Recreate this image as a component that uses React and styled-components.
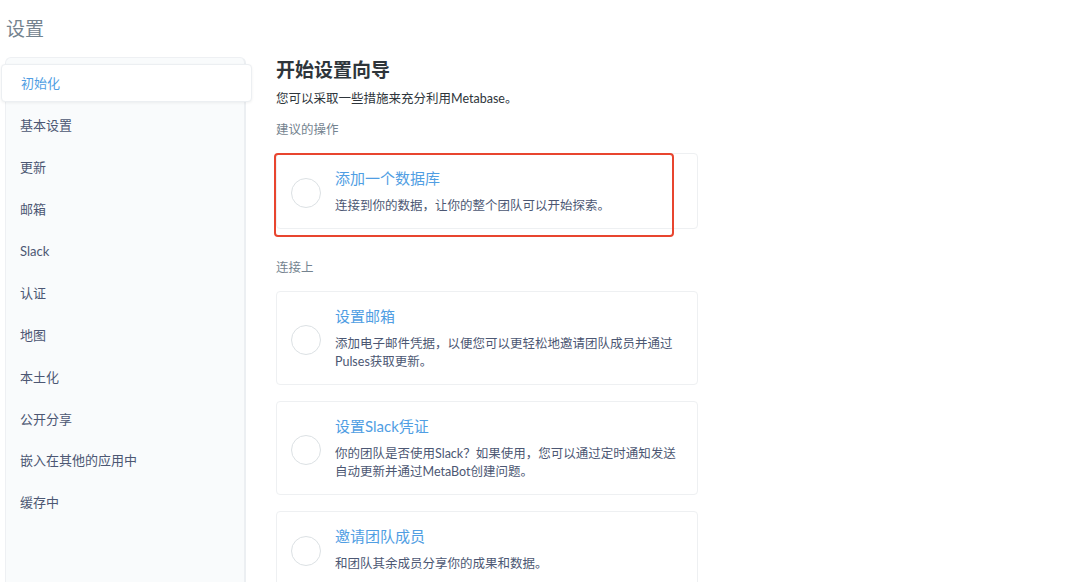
import React from 'react';
import styled, { createGlobalStyle } from 'styled-components';

const GlobalStyle = createGlobalStyle`
  html, body {
    margin: 0;
    padding: 0;
    background: #ffffff;
    font-family: Lato, "Noto Sans CJK SC", sans-serif;
    overflow: hidden;
  }
`;

const navItems = ['初始化', '基本设置', '更新', '邮箱', 'Slack', '认证', '地图', '本土化', '公开分享', '嵌入在其他的应用中', '缓存中'];

const Page = styled.div`
  height: 582px;
  display: flex;
  flex-direction: column;
`;

const PageTitle = styled.h1`
  margin: 0;
  padding: 17px 0 0 6px;
  height: 24px;
  line-height: 24px;
  font-size: 19px;
  font-weight: 400;
  color: #74838f;
  margin-bottom: 16px;
`;

const Body = styled.div`
  flex: 1;
  display: flex;
  align-items: flex-start;
  min-height: 0;
`;

const Sidebar = styled.nav`
  width: 241px;
  margin-left: 5px;
  height: 560px;
  background: #f9fbfc;
  border: 1px solid #eef0f3;
  border-right: 2px solid #eceff2;
  border-radius: 6px 6px 0 0;
  padding-top: 4px;
  box-sizing: border-box;
  flex-shrink: 0;
`;

const NavItem = styled.div`
  height: ${p => (p.$active ? '37.9px' : '41.9px')};
  margin: ${p => (p.$active ? '2px -8px 2px -5px' : '0')};
  padding-left: ${p => (p.$active ? '19px' : '14px')};
  display: flex;
  align-items: center;
  font-size: 13px;
  color: ${p => (p.$active ? '#509ee3' : '#4c5773')};
  background: ${p => (p.$active ? '#ffffff' : 'transparent')};
  border-radius: ${p => (p.$active ? '4px' : '0')};
  border: ${p => (p.$active ? '1px solid #eceff2' : 'none')};
  box-shadow: ${p => (p.$active ? '0 1px 3px rgba(0,0,0,0.06)' : 'none')};
  box-sizing: border-box;
`;

const Main = styled.main`
  margin-left: 30px;
  width: 422px;
`;

const Heading = styled.h2`
  margin: 1px 0 0;
  font-size: 19px;
  line-height: 24px;
  font-weight: 700;
  color: #2e353b;
`;

const Intro = styled.p`
  margin: 8px 0 0;
  font-size: 12.5px;
  line-height: 18px;
  color: #2e353b;
`;

const SectionLabel = styled.div`
  margin-top: ${p => p.$top}px;
  margin-bottom: 14px;
  font-size: 12.5px;
  line-height: 18px;
  color: #74838f;
`;

const CardList = styled.div`
  display: flex;
  flex-direction: column;
  gap: 16px;
`;

const Card = styled.div`
  position: relative;
  display: flex;
  align-items: center;
  padding: 14px 16px 13px 14px;
  border: 1px solid #eef0f2;
  border-radius: 4px;
  background: #ffffff;
  box-sizing: border-box;
`;

const Circle = styled.div`
  width: 28px;
  height: 28px;
  border: 1px solid #dce1e4;
  border-radius: 50%;
  flex-shrink: 0;
  margin-top: 3px;
  margin-right: 14px;
`;

const CardText = styled.div`
  display: flex;
  flex-direction: column;
`;

const CardTitle = styled.div`
  font-size: 15px;
  line-height: 20px;
  color: #509ee3;
  margin-bottom: 9px;
`;

const CardDesc = styled.div`
  font-size: 12.5px;
  line-height: 18px;
  color: #4c5773;
`;

const Highlight = styled.div`
  position: absolute;
  left: -3px;
  top: -1px;
  width: 400px;
  height: 84px;
  border: 2.5px solid #e8452f;
  border-radius: 4px;
  box-sizing: border-box;
  pointer-events: none;
`;

const Task = ({ title, desc, highlight }) => (
  <Card>
    <Circle />
    <CardText>
      <CardTitle>{title}</CardTitle>
      <CardDesc>{desc}</CardDesc>
    </CardText>
    {highlight && <Highlight />}
  </Card>
);

const App = () => (
  <Page>
    <GlobalStyle />
    <PageTitle>设置</PageTitle>
    <Body>
      <Sidebar>
        {navItems.map((item, i) => (
          <NavItem key={item} $active={i === 0}>{item}</NavItem>
        ))}
      </Sidebar>
      <Main>
        <Heading>开始设置向导</Heading>
        <Intro>您可以采取一些措施来充分利用Metabase。</Intro>
        <SectionLabel $top={13}>建议的操作</SectionLabel>
        <Task highlight title="添加一个数据库" desc="连接到你的数据，让你的整个团队可以开始探索。" />
        <SectionLabel $top={30}>连接上</SectionLabel>
        <CardList>
          <Task title="设置邮箱" desc="添加电子邮件凭据，以便您可以更轻松地邀请团队成员并通过Pulses获取更新。" />
          <Task title="设置Slack凭证" desc="你的团队是否使用Slack？如果使用，您可以通过定时通知发送自动更新并通过MetaBot创建问题。" />
          <Task title="邀请团队成员" desc="和团队其余成员分享你的成果和数据。" />
        </CardList>
      </Main>
    </Body>
  </Page>
);

export default App;
